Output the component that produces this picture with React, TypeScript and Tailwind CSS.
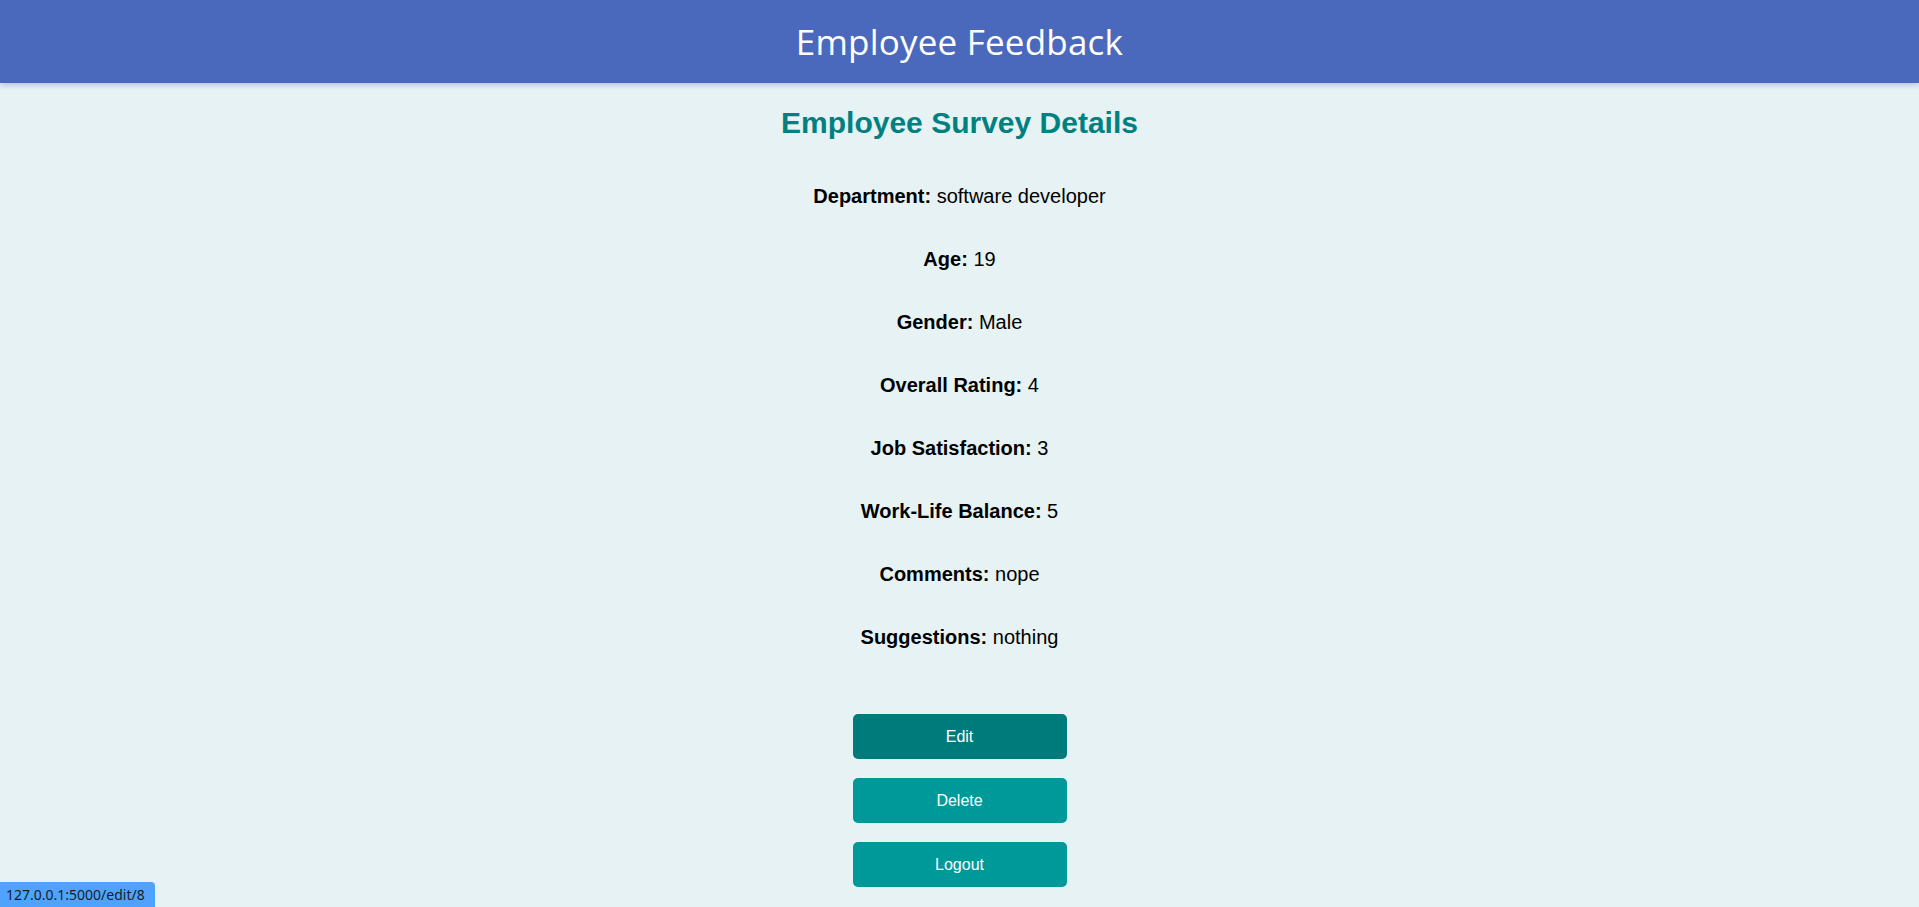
import React from "react";

const rows: [string, string][] = [
  ["Department:", "software developer"],
  ["Age:", "19"],
  ["Gender:", "Male"],
  ["Overall Rating:", "4"],
  ["Job Satisfaction:", "3"],
  ["Work-Life Balance:", "5"],
  ["Comments:", "nope"],
  ["Suggestions:", "nothing"],
];

export default function App() {
  return (
    <div className="min-h-[907px] bg-[#e6f2f4] font-['Liberation_Sans',Arial,sans-serif] text-black">
      <header className="h-[83px] bg-[#4a69bd] flex items-center justify-center shadow-[0_2px_6px_rgba(0,0,0,0.2)] relative z-10">
        <h1 className="text-white text-[35px] font-normal font-['Open_Sans','Noto_Sans',sans-serif] tracking-[0.2px] leading-none mt-[-1px]">
          Employee Feedback
        </h1>
      </header>
      <main className="flex flex-col items-center">
        <h2 className="mt-[23px] text-[30px] leading-[34px] font-bold text-[#008080]">
          Employee Survey Details
        </h2>
        <div className="mt-[45px] flex flex-col items-center gap-[40px]">
          {rows.map(([k, v]) => (
            <p key={k} className="text-[20px] leading-[23px]">
              <strong className="font-bold">{k}</strong> {v}
            </p>
          ))}
        </div>
        <div className="mt-[65px] flex flex-col gap-[19px]">
          <button className="w-[214px] h-[45px] rounded-[5px] bg-[#007b7b] text-white text-[16px]">
            Edit
          </button>
          <button className="w-[214px] h-[45px] rounded-[5px] bg-[#009999] text-white text-[16px]">
            Delete
          </button>
          <button className="w-[214px] h-[45px] rounded-[5px] bg-[#009999] text-white text-[16px]">
            Logout
          </button>
        </div>
      </main>
      <div className="fixed left-0 bottom-0 h-[25px] w-[155px] bg-[#4fa3ff] rounded-tr-[4px] flex items-center pl-[6px] text-[14px] text-[#1b1b1b] font-['Noto_Sans','Open_Sans',sans-serif]">
        127.0.0.1:5000/edit/8
      </div>
    </div>
  );
}
